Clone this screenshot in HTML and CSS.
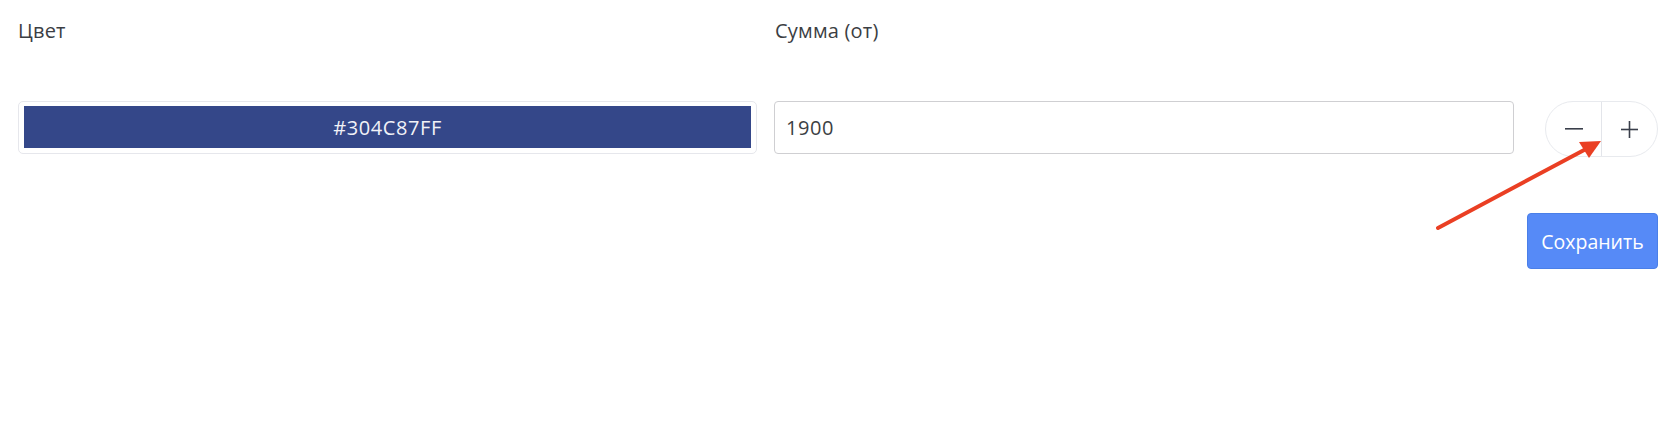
FILE: index.html
```html
<!DOCTYPE html>
<html lang="ru">
<head>
<meta charset="utf-8">
<link rel="stylesheet" href="styles.css">
</head>
<body>
<div class="page">
  <div class="grid">
    <div class="field-label">Цвет</div>
    <div class="field-label label-sum">Сумма (от)</div>
    <div></div>
    <div class="color-box"><div class="swatch">#304C87FF</div></div>
    <div class="input">1900</div>
    <div class="stepper">
      <div class="step step-minus"><svg width="18" height="2" viewBox="0 0 18 2"><rect x="0" y="0" width="18" height="1.6" fill="#3a3f4b"/></svg></div>
      <div class="step step-plus"><svg width="17" height="17" viewBox="0 0 17 17"><rect x="0" y="7.7" width="17" height="1.6" fill="#3a3f4b"/><rect x="7.7" y="0" width="1.6" height="17" fill="#3a3f4b"/></svg></div>
    </div>
  </div>
  <div class="actions"><button class="save">Сохранить</button></div>
</div>
<svg class="arrow" width="1680" height="424" viewBox="0 0 1680 424">
  <line x1="1438" y1="228" x2="1586" y2="149" stroke="#ea3f23" stroke-width="4" stroke-linecap="round"/>
  <polygon points="1601,141 1579,142 1589,158" fill="#ea3f23"/>
</svg>
</body>
</html>
```
FILE: styles.css
```css
html, body {
  margin: 0;
  padding: 0;
  background: #ffffff;
}
body {
  font-family: "Open Sans", "Noto Sans", sans-serif;
  color: #3a3d42;
  width: 1680px;
  height: 424px;
  position: relative;
  overflow: hidden;
}
.page {
  padding: 19px 22px 0 18px;
}
.grid {
  display: grid;
  grid-template-columns: 739px 740px 113px;
  column-gap: 17px;
  row-gap: 58px;
  align-items: start;
}
.grid > :nth-child(3n) {
  margin-left: 14px;
}
.field-label {
  font-size: 20px;
  line-height: 24px;
  color: #3b3e43;
  letter-spacing: 0.2px;
}
.label-sum {
  padding-left: 1px;
}
.color-box {
  box-sizing: border-box;
  height: 53px;
  border: 1px solid #e6e7ec;
  border-radius: 5px;
  padding: 4px 5px 5px 5px;
}
.swatch {
  height: 42px;
  background: #344789;
  color: #f1f2f7;
  font-size: 20px;
  display: flex;
  align-items: center;
  justify-content: center;
  letter-spacing: 0.6px;
}
.input {
  box-sizing: border-box;
  height: 53px;
  border: 1px solid #cfcfd2;
  border-radius: 4px;
  padding: 0 11px;
  display: flex;
  align-items: center;
  font-size: 20px;
  letter-spacing: 0.6px;
  color: #3c3f44;
}
.stepper {
  box-sizing: border-box;
  height: 56px;
  width: 113px;
  border: 1px solid #e8eaee;
  border-radius: 28px;
  display: flex;
}
.step {
  flex: 1;
  display: flex;
  align-items: center;
  justify-content: center;
}
.step-minus {
  border-right: 1px solid #e3e5ea;
}
.actions {
  display: flex;
  justify-content: flex-end;
  margin-top: 56px;
}
.save {
  width: 131px;
  height: 56px;
  border: 1px solid #4a7fe8;
  border-radius: 4px;
  background: #568af7;
  color: #ffffff;
  font-family: "Open Sans", "Noto Sans", sans-serif;
  font-size: 19.5px;
  padding: 0;
  cursor: pointer;
}
.arrow {
  position: absolute;
  left: 0;
  top: 0;
  pointer-events: none;
}
```
